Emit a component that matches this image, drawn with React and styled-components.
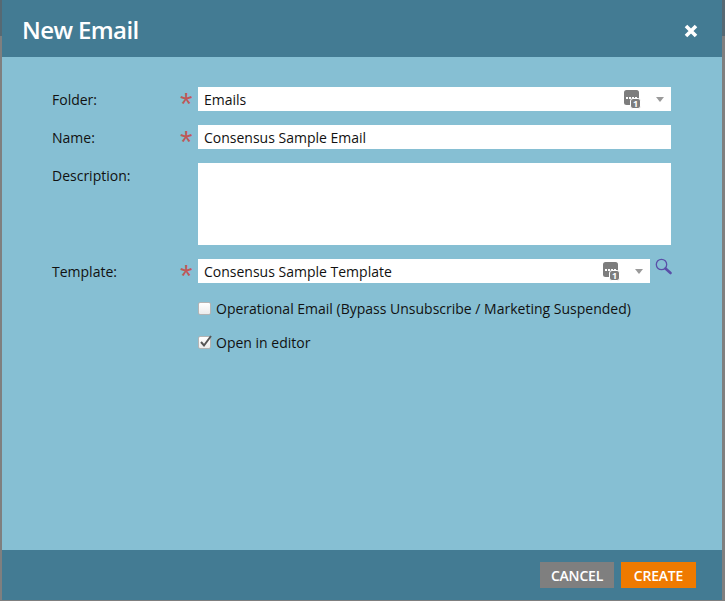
import styled, { createGlobalStyle } from 'styled-components';
import { Fragment } from 'react';

const GlobalStyle = createGlobalStyle`
  html, body {
    margin: 0;
    padding: 0;
    background: #7f7f7f;
  }
  * {
    box-sizing: border-box;
  }
`;

const Dialog = styled.div`
  width: 725px;
  height: 601px;
  padding: 0 3px 1px 2px;
  display: flex;
  flex-direction: column;
  background: linear-gradient(#566973 0 36px, #7f7f7f 36px);
  font-family: 'Open Sans', sans-serif;
  color: #111;
`;

const Header = styled.header`
  height: 57px;
  flex: none;
  padding: 2px 24px 0 20px;
  display: flex;
  align-items: center;
  justify-content: space-between;
  background: #437b93;
`;

const Title = styled.h1`
  margin: 0;
  font-size: 24px;
  font-weight: 600;
  letter-spacing: -0.6px;
  color: #fff;
`;

const CloseIcon = styled.svg`
  width: 14px;
  height: 14px;
  margin-top: 2px;
  display: block;
`;

const Body = styled.main`
  flex: 1;
  padding: 30px 0 0 50px;
  background: #86bfd3;
`;

const FormGrid = styled.div`
  display: grid;
  grid-template-columns: 126px 20px 473px;
  row-gap: 14px;
  align-items: center;
  font-size: 14px;
`;

const Label = styled.label`
  align-self: ${(p) => (p.$top ? 'start' : 'center')};
  height: 24px;
  line-height: 26px;
`;

const Required = styled.span`
  font-size: 32px;
  line-height: 24px;
  height: 24px;
  margin-left: 2px;
  padding-top: 5px;
  color: #bf5858;
  font-family: 'Liberation Sans', sans-serif;
`;

const InputBox = styled.div`
  height: ${(p) => p.$height || 24}px;
  width: ${(p) => p.$width || 473}px;
  flex: none;
  padding: 1px 7px 0 6px;
  display: flex;
  align-items: center;
  background: #fff;
  line-height: 24px;
`;

const Value = styled.span`
  flex: 1;
`;

const TreeIcon = styled.svg`
  width: 17px;
  height: 19px;
  display: block;
`;

const Caret = styled.span`
  width: 0;
  height: 0;
  margin-left: 15px;
  border-left: 4.5px solid transparent;
  border-right: 4.5px solid transparent;
  border-top: 5px solid #9a9a9a;
`;

const TemplateRow = styled.div`
  display: flex;
  align-items: flex-start;
  gap: 5px;
`;

const SearchIcon = styled.svg`
  width: 17px;
  height: 17px;
  margin-top: -1px;
  flex: none;
  display: block;
`;

const CheckRow = styled.div`
  grid-column: 3;
  display: flex;
  align-items: center;
  gap: 5px;
  height: 20px;
  margin-top: ${(p) => p.$gap}px;
`;

const CheckBox = styled.span`
  width: 13px;
  height: 13px;
  position: relative;
  flex: none;
  background: linear-gradient(#ffffff, #ececec);
  border: 1px solid #b4b4b4;
  border-radius: 2px;
`;

const CheckMark = styled.svg`
  position: absolute;
  left: -1px;
  top: -3px;
  width: 15px;
  height: 15px;
`;

const Footer = styled.footer`
  height: 50px;
  flex: none;
  padding: 12px 26px 0 0;
  display: flex;
  justify-content: flex-end;
  gap: 7px;
  background: #437b93;
`;

const Button = styled.button`
  width: ${(p) => p.$width}px;
  height: 26px;
  padding: 0;
  border: 0;
  background: ${(p) => p.$bg};
  color: #fff;
  font-family: 'Open Sans', sans-serif;
  font-size: 14px;
  font-weight: 600;
  letter-spacing: -0.2px;
`;

function Tree() {
  return (
    <TreeIcon viewBox="0 0 17 19">
      <rect x="0" y="0" width="15" height="15" rx="2.5" fill="#7d7d7d" />
      <rect x="2" y="7" width="2" height="2" fill="#fff" />
      <rect x="5" y="7" width="2" height="2" fill="#fff" />
      <rect x="8" y="7" width="2" height="2" fill="#fff" />
      <rect x="11" y="7" width="2" height="2" fill="#fff" />
      <rect x="6.5" y="8.5" width="10" height="10" rx="2.5" fill="#7d7d7d" stroke="#fff" strokeWidth="1" />
      <text x="11.5" y="17" fontSize="9" fontWeight="700" textAnchor="middle" fill="#fff" fontFamily="Open Sans, sans-serif">1</text>
    </TreeIcon>
  );
}

export default function App() {
  return (
    <Fragment>
      <GlobalStyle />
      <Dialog>
        <Header>
          <Title>New Email</Title>
          <CloseIcon viewBox="0 0 14 14">
            <path d="M2 2 L12 12 M12 2 L2 12" stroke="#fff" strokeWidth="3.6" />
          </CloseIcon>
        </Header>
        <Body>
          <FormGrid>
            <Label>Folder:</Label>
            <Required>*</Required>
            <InputBox>
              <Value>Emails</Value>
              <Tree />
              <Caret />
            </InputBox>

            <Label>Name:</Label>
            <Required>*</Required>
            <InputBox>
              <Value>Consensus Sample Email</Value>
            </InputBox>

            <Label $top>Description:</Label>
            <span />
            <InputBox $height={82} />

            <Label>Template:</Label>
            <Required>*</Required>
            <TemplateRow>
              <InputBox $width={452}>
                <Value>Consensus Sample Template</Value>
                <Tree />
                <Caret />
              </InputBox>
              <SearchIcon viewBox="0 0 17 17">
                <circle cx="6.5" cy="6.5" r="5.2" fill="none" stroke="#5a4fa8" strokeWidth="1.3" />
                <path d="M10.5 10.5 L15.5 15" stroke="#5a4fa8" strokeWidth="2.6" strokeLinecap="round" />
              </SearchIcon>
            </TemplateRow>

            <CheckRow $gap={1}>
              <CheckBox />
              <span>Operational Email (Bypass Unsubscribe / Marketing Suspended)</span>
            </CheckRow>
            <CheckRow $gap={0}>
              <CheckBox>
                <CheckMark viewBox="0 0 15 15">
                  <path d="M3 8 L6 11.5 L13 2" fill="none" stroke="#555" strokeWidth="2" />
                </CheckMark>
              </CheckBox>
              <span>Open in editor</span>
            </CheckRow>
          </FormGrid>
        </Body>
        <Footer>
          <Button $width={74} $bg="#7f7f7f">CANCEL</Button>
          <Button $width={75} $bg="#ef7a00">CREATE</Button>
        </Footer>
      </Dialog>
    </Fragment>
  );
}
